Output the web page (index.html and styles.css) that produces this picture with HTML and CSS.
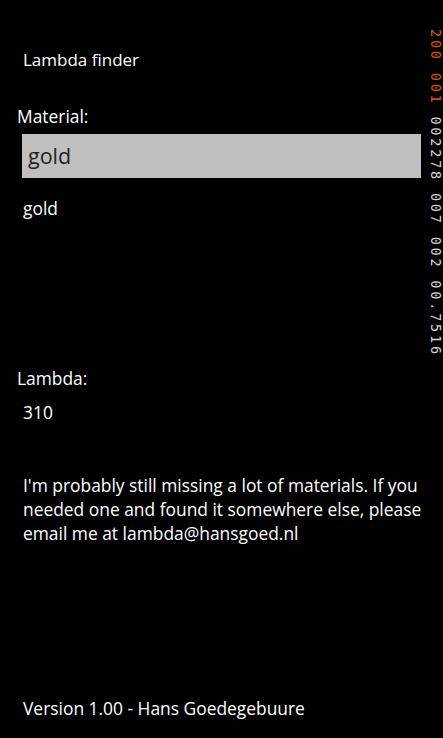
FILE: index.html
```html
<!DOCTYPE html>
<html lang="en">
<head>
  <meta charset="UTF-8">
  <meta name="viewport" content="width=device-width, initial-scale=1.0">
  <title>Lambda finder</title>
  <link rel="stylesheet" href="styles.css">
</head>
<body>
  <!-- App page -->
  <main class="page">
    <h1 class="app-title">Lambda finder</h1>

    <section class="search">
      <label class="field-label" for="material">Material:</label>
      <div class="textbox" id="material">gold</div>
      <ul class="results">
        <li>gold</li>
      </ul>
    </section>

    <section class="lambda">
      <p class="field-label">Lambda:</p>
      <p class="value">310</p>
    </section>

    <p class="note">I'm probably still missing a lot of materials. If you needed one and found it somewhere else, please email me at lambda@hansgoed.nl</p>

    <footer class="version">Version 1.00 - Hans Goedegebuure</footer>
  </main>

  <!-- Frame rate counters drawn by the phone over the app -->
  <div class="counters"><span class="hot">200 001</span> 002278 007 002 00.7516</div>
</body>
</html>
```

FILE: styles.css
```css
/* Phone page, dark theme */
body {
  margin: 0;
  background: #000;
  color: #fff;
  font-family: "Open Sans", "Noto Sans", sans-serif;
  font-size: 17.4px;
  line-height: 24px;
}

.page {
  height: 738px;
  box-sizing: border-box;
  padding: 48px 22px 18px 23px;
  display: flex;
  flex-direction: column;
}

.app-title {
  margin: 0;
  font-size: 17px;
  font-weight: normal;
}

.search {
  margin-top: 32px;
}

.field-label {
  display: block;
  margin: 0 0 0 -6px;
}

.textbox {
  margin: 6px 0 0 -1px;
  height: 44px;
  padding-left: 6px;
  background: #bfbfbf;
  color: #222;
  font-size: 21.5px;
  line-height: 44px;
}

.results {
  list-style: none;
  margin: 18px 0 0;
  padding: 0;
  height: 170px;
}

.lambda .value {
  margin: 10px 0 0;
}

.note {
  margin: 49px -4px 0 0;
}

.version {
  margin-top: auto;
}

/* Overlay counters on the right edge */
.counters {
  position: absolute;
  top: 29px;
  right: 0;
  writing-mode: vertical-rl;
  font-family: "DejaVu Sans Mono", monospace;
  font-size: 13.5px;
  line-height: 15px;
  letter-spacing: 2.8px;
  color: #d8d8d8;
  white-space: pre;
}

.hot {
  color: #e2560c;
}
```
